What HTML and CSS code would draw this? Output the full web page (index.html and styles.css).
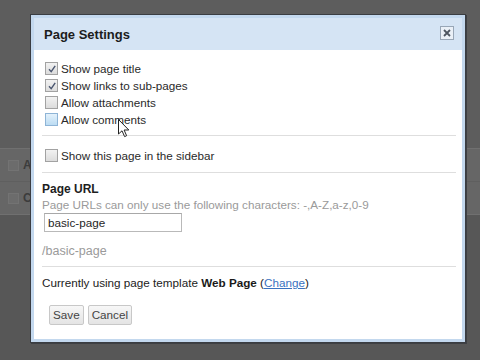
FILE: index.html
```html
<!DOCTYPE html>
<html>
<head>
<meta charset="utf-8">
<title>Page Settings</title>
<link rel="stylesheet" href="styles.css">
</head>
<body>
<div class="page">
  <div class="page-top"></div>
  <div class="page-list">
    <div class="page-row"><span class="pg-box"></span><span class="pg-text">Al</span></div>
    <div class="page-row"><span class="pg-box"></span><span class="pg-text">C</span></div>
  </div>
</div>

<div class="dialog">
  <div class="dialog-inner">
    <div class="dialog-header">
      <span class="dialog-title">Page Settings</span>
      <span class="close-btn">
        <svg width="8" height="8" viewBox="0 0 8 8"><path d="M1 1L7 7M7 1L1 7" stroke="#4d5560" stroke-width="1.8" fill="none"/></svg>
      </span>
    </div>
    <div class="dialog-body">
      <div class="section section-checks">
        <label class="check-row"><span class="cb checked"><svg width="10" height="10" viewBox="0 0 10 10"><path d="M2 5.2L4.2 7.6L8.2 1.8" stroke="#4a5670" stroke-width="1.4" fill="none"/></svg></span>Show page title</label>
        <label class="check-row"><span class="cb checked"><svg width="10" height="10" viewBox="0 0 10 10"><path d="M2 5.2L4.2 7.6L8.2 1.8" stroke="#4a5670" stroke-width="1.4" fill="none"/></svg></span>Show links to sub-pages</label>
        <label class="check-row"><span class="cb"></span>Allow attachments</label>
        <label class="check-row"><span class="cb hover"></span>Allow comments</label>
      </div>
      <div class="section section-sidebar">
        <label class="check-row"><span class="cb"></span>Show this page in the sidebar</label>
      </div>
      <div class="section section-url">
        <div class="field-title">Page URL</div>
        <div class="hint">Page URLs can only use the following characters: -,A-Z,a-z,0-9</div>
        <div class="url-input">basic-page</div>
        <div class="url-preview">/basic-page</div>
      </div>
      <div class="section section-template">
        <div class="template-line">Currently using page template <b>Web Page</b> (<a class="link">Change</a>)</div>
        <div class="buttons">
          <span class="btn">Save</span>
          <span class="btn">Cancel</span>
        </div>
      </div>
    </div>
  </div>
</div>

<svg class="cursor" width="12" height="19" viewBox="0 0 12 19">
  <path d="M0.5 0.5L0.5 15L4 11.8L6.6 17.6L8.6 16.7L6.1 11L10.8 11Z" fill="#ffffff" stroke="#222" stroke-width="1"/>
</svg>
</body>
</html>
```
FILE: styles.css
```css
html, body {
  margin: 0;
  padding: 0;
}
body {
  width: 480px;
  height: 360px;
  overflow: hidden;
  background: #575757;
  font-family: "Liberation Sans", Arial, sans-serif;
  position: relative;
}
.page {
  display: flex;
  flex-direction: column;
}
.page-top {
  height: 148px;
  background: #5d5d5d;
}
.page-list {
  background: #666666;
  border-top: 1px solid #707070;
  border-bottom: 1px solid #707070;
}
.page-row {
  height: 32px;
  display: flex;
  align-items: center;
  gap: 4px;
  padding-left: 8px;
  border-bottom: 1px solid #5f5f5f;
  color: #3a3a3a;
  font-size: 12px;
  font-weight: bold;
}
.page-row:last-child { border-bottom: none; }
.pg-box {
  width: 9px;
  height: 9px;
  border: 1px solid #737373;
  background: #6c6c6c;
}
.pg-text { color: #3c3c3c; }

.dialog {
  position: absolute;
  left: 30px;
  top: 14px;
  border: 1px solid #3a3d42;
  box-shadow: 1px 1px 0 #3e4044;
  background: #c3d8ee;
  padding: 3px;
  box-sizing: border-box;
  width: 436px;
  height: 329px;
}
.dialog-inner {
  background: #ffffff;
  height: 100%;
  display: flex;
  flex-direction: column;
}
.dialog-header {
  height: 32px;
  background: #d5e4f4;
  display: flex;
  align-items: center;
  justify-content: space-between;
  padding: 0 8px 0 10px;
}
.dialog-title {
  font-size: 13px;
  font-weight: bold;
  color: #1c1c1c;
  padding-top: 1px;
}
.close-btn {
  width: 12px;
  height: 12px;
  border: 1px solid #98a6b6;
  background: #eaf0f7;
  display: flex;
  align-items: center;
  justify-content: center;
  margin-top: -2px;
}
.dialog-body {
  padding: 0 6px 0 8px;
  display: flex;
  flex-direction: column;
  font-size: 11.7px;
  color: #222;
}
.section {
  border-bottom: 1px solid #dedede;
}
.section:last-child { border-bottom: none; }
.section-checks { padding: 10px 0 7px; }
.section-sidebar { padding: 11px 0 8px; }
.section-url { padding: 8px 0 7px; }
.section-template { padding: 8px 0 0; }

.check-row {
  display: flex;
  align-items: center;
  height: 17px;
  color: #2a2a2a;
}
.cb {
  width: 11px;
  height: 11px;
  margin: 0 3px 0 3px;
  border: 1px solid #a2a2a2;
  background: linear-gradient(#f2f2f2, #dcdcdc);
  display: flex;
  align-items: center;
  justify-content: center;
}
.cb.hover {
  border-color: #8eb4d6;
  background: linear-gradient(#e3f1fb, #bcdcf3);
}
.field-title {
  font-weight: bold;
  font-size: 12px;
  height: 16px;
  line-height: 16px;
  color: #1e1e1e;
}
.hint {
  color: #9a9a9a;
  height: 15px;
  line-height: 15px;
}
.url-input {
  width: 130px;
  height: 17px;
  line-height: 17px;
  margin: 1px 0 0 2px;
  padding: 0 3px;
  border: 1px solid #b9b9b9;
  border-top-color: #a8a8a8;
  color: #1f1f1f;
}
.url-preview {
  color: #9a9a9a;
  font-size: 12.5px;
  height: 16px;
  line-height: 16px;
  margin-top: 11px;
}
.template-line {
  height: 16px;
  line-height: 16px;
  color: #222;
}
.template-line b { color: #1a1a1a; }
.link {
  color: #3a72c0;
  text-decoration: underline;
}
.buttons {
  display: flex;
  gap: 4px;
  margin: 14px 0 0 7px;
}
.btn {
  height: 18px;
  line-height: 18px;
  padding: 0 3px;
  border: 1px solid #c8c8c8;
  border-radius: 2px;
  background: linear-gradient(#f7f7f7, #e4e4e4);
  color: #444;
  font-size: 11.7px;
}
.cursor {
  position: absolute;
  left: 118px;
  top: 119px;
}
```
